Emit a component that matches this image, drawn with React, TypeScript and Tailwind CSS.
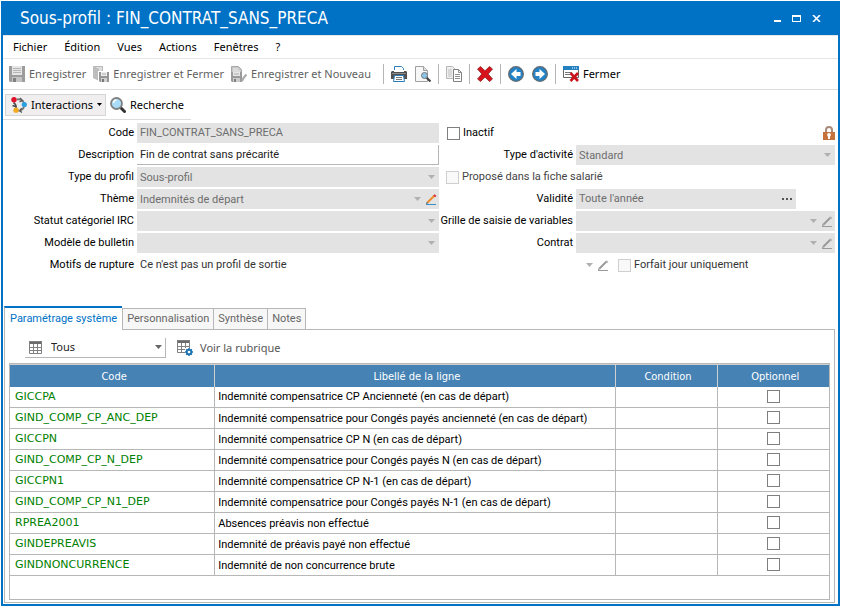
import { useState, type ReactNode } from 'react'

const body = "font-['Roboto',sans-serif]"
const wide = "font-['DejaVu_Sans',sans-serif]"

const lines = [
  { code: 'GICCPA', label: 'Indemnité compensatrice CP Ancienneté (en cas de départ)' },
  { code: 'GIND_COMP_CP_ANC_DEP', label: 'Indemnité compensatrice pour Congés payés ancienneté (en cas de départ)' },
  { code: 'GICCPN', label: 'Indemnité compensatrice CP N (en cas de départ)' },
  { code: 'GIND_COMP_CP_N_DEP', label: 'Indemnité compensatrice pour Congés payés N (en cas de départ)' },
  { code: 'GICCPN1', label: 'Indemnité compensatrice CP N-1 (en cas de départ)' },
  { code: 'GIND_COMP_CP_N1_DEP', label: 'Indemnité compensatrice pour Congés payés N-1 (en cas de départ)' },
  { code: 'RPREA2001', label: 'Absences préavis non effectué' },
  { code: 'GINDEPREAVIS', label: 'Indemnité de préavis payé non effectué' },
  { code: 'GINDNONCURRENCE', label: 'Indemnité de non concurrence brute' },
]

/* ---------- icons ---------- */

function Svg({ children, className = 'h-4 w-4' }: { children: ReactNode; className?: string }) {
  return (
    <svg viewBox="0 0 16 16" className={`shrink-0 ${className}`} fill="none" aria-hidden="true">
      {children}
    </svg>
  )
}

function SaveIcon() {
  return (
    <Svg>
      <path d="M0 0h16v16H1l-1-1z" fill="#9c9c9c" />
      <path d="M3 0h10v9H3z" fill="#e6e6e6" />
      <path d="M4 2.500h8M4 4.500h8M4 6.500h8" stroke="#b5b5b5" />
      <path d="M3 11h10v5H3z" fill="#c4c4c4" />
      <path d="M4 12h3v4H4z" fill="#808080" />
    </Svg>
  )
}

function SaveCloseIcon() {
  return (
    <Svg>
      <path d="M.5.5h9v11h-9z" fill="#dedede" stroke="#b8b8b8" />
      <path d="M0 0l6 3v12l-6-3z" fill="#bdbdbd" />
      <path d="M5 5h11v11H5z" fill="#fff" />
      <path d="M6 6h10v10H7l-1-1z" fill="#969696" />
      <path d="M8 6h6v4H8z" fill="#efefef" />
      <path d="M9 8h4" stroke="#aaa" />
      <path d="M8 12h6v4H8z" fill="#d0d0d0" />
      <path d="M9 13h2v3H9z" fill="#777" />
    </Svg>
  )
}

function SaveNewIcon() {
  return (
    <Svg>
      <path d="M.5.5h7l3 3V8H.5z" fill="#c6c6c6" stroke="#a8a8a8" />
      <path d="M2 3h5M2 5h7" stroke="#eee" />
      <path d="M0 6h11v10H1l-1-1z" fill="#9a9a9a" />
      <path d="M2 6h7v4H2z" fill="#e8e8e8" />
      <path d="M3 8h5" stroke="#aaa" />
      <path d="M2 12h7v4H2z" fill="#ccc" />
      <path d="M3 13h2v3H3z" fill="#808080" />
      <path d="M11 15l1.500-3 3-3.500" stroke="#aaa" strokeWidth="2.200" />
    </Svg>
  )
}

function PrinterIcon() {
  return (
    <Svg>
      <path d="M3.500.5h7l2 2v4h-9z" fill="#fff" stroke="#2b7cb8" />
      <path d="M1 5h14l1 1v7H0V6z" fill="#505050" />
      <path d="M3 4h10v2H3z" fill="#fff" />
      <path d="M1 7.500h14" stroke="#8b8b8b" />
      <path d="M3.500 9.500h9l1 6h-11z" fill="#fff" stroke="#2b7cb8" />
      <path d="M5 11.500h6M5 13.500h6" stroke="#777" />
    </Svg>
  )
}

function PreviewIcon() {
  return (
    <Svg>
      <path d="M.5.5h8l4 4v11H.5z" fill="#f7f7f7" stroke="#a0a0a0" />
      <path d="M8.500.5v4h4" fill="#ddd" stroke="#a0a0a0" />
      <path d="M11.500 11.500l4 4" stroke="#444" strokeWidth="2.200" />
      <circle cx="9.500" cy="9.500" r="3" fill="#8cc4e8" stroke="#777" />
    </Svg>
  )
}

function CopyIcon() {
  return (
    <Svg>
      <path d="M.5.5h6l2 2v10h-8z" fill="#efefef" stroke="#b8b8b8" />
      <path d="M2 4h4M2 6h4M2 8h4M2 10h4" stroke="#c0c0c0" />
      <path d="M7.500 3.500h5l3 3v9h-8z" fill="#fff" stroke="#808080" />
      <path d="M12.500 3.500v3h3M9 8.500h5M9 10.500h5M9 12.500h5" stroke="#909090" />
    </Svg>
  )
}

function DeleteIcon() {
  return (
    <Svg>
      <path
        d="M.5 3L3.500.5 8 4.800 12.500.5l3 2.500-4.300 5 4.300 5-3 2.500L8 11.200l-4.500 4.300-3-2.500L4.800 8z"
        fill="#d8121b"
        stroke="#8a2a2c"
        strokeWidth=".8"
      />
    </Svg>
  )
}

function ArrowIcon({ flip = false }: { flip?: boolean }) {
  return (
    <Svg className={flip ? 'h-4 w-4 -scale-x-100' : 'h-4 w-4'}>
      <circle cx="8" cy="8" r="7.300" fill="#2482c4" stroke="#5f6a72" strokeWidth="1.300" />
      <path d="M8.500 3L3 8l5.500 5v-3h4V6h-4z" fill="#fff" />
    </Svg>
  )
}

function CloseWindowIcon() {
  return (
    <Svg>
      <path d="M.5.5h15v11H.5z" fill="#fff" stroke="#666" />
      <path d="M0 0h16v4H0z" fill="#2480be" />
      <path d="M9 2h1M11 2h1M13 2h1" stroke="#fff" />
      <path d="M2 6.500h7M2 8.500h5" stroke="#777" />
      <path d="M7.500 7l7.500 8M15 7l-7.500 8" stroke="#c9141d" strokeWidth="2.600" />
    </Svg>
  )
}

function InteractionsIcon() {
  return (
    <Svg>
      <path d="M5.500 2.500c4-1 7 1 7.500 4M13 9.500c-.5 3-3.500 4.500-6.500 4" stroke="#777" strokeWidth="1.800" />
      <path d="M2.500 5.500c2 1.500 3 3.500 2.500 6M1.500 8.500l3 1" stroke="#4a4a4a" strokeWidth="1.600" />
      <path d="M9 .8l2.500 2.700-3 1.500M10.500 11l-1.500 3 2 1.500" stroke="#555" strokeWidth="1.200" />
      <circle cx="3" cy="2.800" r="2.700" fill="#e3122b" />
      <circle cx="13.300" cy="7.500" r="2.600" fill="#2ba0df" />
      <circle cx="5" cy="13.200" r="2.600" fill="#f2ab1b" />
    </Svg>
  )
}

function SearchIcon() {
  return (
    <Svg>
      <path d="M10.500 10.500l4 4" stroke="#333" strokeWidth="3" strokeLinecap="round" />
      <circle cx="6.500" cy="6.500" r="5.500" fill="#a9dcf6" stroke="#808080" strokeWidth="1.800" />
      <path d="M3.500 6a3 3 0 0 1 3-3" stroke="#fff" strokeWidth="1.500" />
    </Svg>
  )
}

function Caret({ className = 'text-[#b0b0b0]' }: { className?: string }) {
  return (
    <svg viewBox="0 0 7 4" className={`h-1 w-[7px] shrink-0 ${className}`} aria-hidden="true">
      <path d="M0 0h7L3.500 4z" fill="currentColor" />
    </svg>
  )
}

function Pencil({ color = false }: { color?: boolean }) {
  return (
    <svg viewBox="0 0 11 11" className="block h-[11px] w-[11px] shrink-0" fill="none" aria-hidden="true">
      <path d="M0 10.500h10" stroke={color ? '#3b8fc4' : '#9b9b9b'} />
      <path d="M1.500 8.500L8.500 1.500" stroke={color ? '#ee8b2a' : '#9a9a9a'} strokeWidth="2" />
      <path d="M8 .8l1.800 1.800" stroke={color ? '#d8283c' : '#b5b5b5'} strokeWidth="1.800" />
      <path d="M0 10l.8-2.300 1.500 1.500z" fill={color ? '#555' : '#8f8f8f'} />
    </svg>
  )
}

function LockIcon() {
  return (
    <svg viewBox="0 0 12 14" className="h-3.5 w-3 shrink-0" fill="none" role="img" aria-label="Verrouillé">
      <path d="M3 7V4a3 3 0 0 1 6 0v3" stroke="#a98a78" strokeWidth="2" />
      <path d="M0 6h12v8H0z" fill="#c5733b" />
      <circle cx="6" cy="8.800" r="1.900" fill="#fff" />
      <path d="M5 9h2v4H5z" fill="#fff" />
    </svg>
  )
}

function GridIcon() {
  return (
    <svg viewBox="0 0 13 13" className="h-[13px] w-[13px] shrink-0" fill="none" aria-hidden="true">
      <path d="M0 0h13v3H0z" fill="#6a6a6a" />
      <path d="M.5.5h12v12H.5zM0 6.500h13M0 9.500h13M4.500 3v10M8.500 3v10" stroke="#808080" />
    </svg>
  )
}

function GridGearIcon() {
  return (
    <Svg>
      <path d="M0 0h13v3H0z" fill="#6a6a6a" />
      <path d="M.5.5h12v12H.5zM0 6.500h13M0 9.500h13M4.500 3v10M8.500 3v10" stroke="#808080" />
      <path d="M8 8h8v8H8z" fill="#fff" />
      <circle cx="12" cy="12" r="2.300" stroke="#2277b5" strokeWidth="2" />
      <path
        d="M12 8v1.500M12 14.500V16M8 12h1.500M14.500 12H16M9.200 9.200l1 1M13.800 13.800l1 1M14.800 9.200l-1 1M9.200 14.800l1-1"
        stroke="#2277b5"
        strokeWidth="1.600"
      />
    </Svg>
  )
}

/* ---------- controls ---------- */

function ToolButton({ icon, children, muted = false }: { icon: ReactNode; children: string; muted?: boolean }) {
  return (
    <button type="button" className={`flex items-center gap-1 whitespace-nowrap ${muted ? 'text-[#5f5f5f]' : 'text-black'}`}>
      {icon}
      {children}
    </button>
  )
}

function IconButton({ label, children }: { label: string; children: ReactNode }) {
  return (
    <button type="button" aria-label={label}>
      {children}
    </button>
  )
}

function Separator() {
  return <span className="h-5 w-px bg-[#b5b5b5]" />
}

function Label({ id, children }: { id: string; children: string }) {
  return (
    <label htmlFor={id} className="pr-[3px] text-right whitespace-nowrap text-black">
      {children}
    </label>
  )
}

function SelectField({ id, value = '', edit, color }: { id: string; value?: string; edit?: string; color?: boolean }) {
  return (
    <div className={`flex h-5 items-center gap-[5px] bg-[#e3e3e3] ${edit ? 'pr-0.5' : 'pr-1'}`}>
      <select id={id} disabled className="h-5 min-w-0 flex-1 appearance-none pt-px pl-[3px] text-[#6d6d6d] opacity-100">
        <option>{value}</option>
      </select>
      <Caret />
      {edit && (
        <IconButton label={edit}>
          <Pencil color={color} />
        </IconButton>
      )}
    </div>
  )
}

function CheckBox({ disabled = false, label }: { disabled?: boolean; label?: string }) {
  return (
    <input
      type="checkbox"
      aria-label={label}
      disabled={disabled}
      className="block h-[13px] w-[13px] shrink-0 appearance-none border border-[#7f7f7f] bg-white checked:bg-[#0072c6] disabled:border-[#cfcfcf] disabled:bg-[#f9f9f9]"
    />
  )
}

/* ---------- sections ---------- */

function TitleBar() {
  return (
    <header className="flex h-8 items-center justify-between bg-[#0072c6] pr-[17px] pb-0.5 pl-[17px] text-white">
      <h1 className="font-['DejaVu_Sans_Condensed','DejaVu_Sans',sans-serif] text-[17px] font-stretch-condensed whitespace-nowrap">
        Sous-profil : FIN_CONTRAT_SANS_PRECA
      </h1>
      <div className="flex items-center gap-[11px]">
        <button type="button" aria-label="Réduire" className="flex h-[7px] w-[7px] items-end">
          <span className="h-0.5 w-full bg-white" />
        </button>
        <button type="button" aria-label="Agrandir" className="h-[7px] w-[9px] border border-t-2 border-white" />
        <button type="button" aria-label="Fermer la fenêtre">
          <svg viewBox="0 0 9 7" className="block h-[7px] w-[9px]" aria-hidden="true">
            <path d="M1 0l7 7M8 0L1 7" stroke="#fff" strokeWidth="1.600" />
          </svg>
        </button>
      </div>
    </header>
  )
}

function MenuBar() {
  return (
    <nav className="flex h-6 items-center gap-[17px] border-t border-b border-[#e6e6e6] px-2.5 text-black">
      {['Fichier', 'Édition', 'Vues', 'Actions', 'Fenêtres', '?'].map((item) => (
        <button key={item} type="button">
          {item}
        </button>
      ))}
    </nav>
  )
}

function Toolbar() {
  return (
    <div className="flex h-[31px] items-center border-b border-[#dcdcdc] pl-1.5">
      <div className="flex items-center gap-[7px]">
        <ToolButton muted icon={<SaveIcon />}>Enregistrer</ToolButton>
        <ToolButton muted icon={<SaveCloseIcon />}>Enregistrer et Fermer</ToolButton>
        <ToolButton muted icon={<SaveNewIcon />}>Enregistrer et Nouveau</ToolButton>
      </div>
      <div className="flex items-center gap-[7px] pl-3">
        <Separator />
        <div className="flex gap-2">
          <IconButton label="Imprimer"><PrinterIcon /></IconButton>
          <IconButton label="Aperçu"><PreviewIcon /></IconButton>
        </div>
        <Separator />
        <IconButton label="Copier"><CopyIcon /></IconButton>
        <Separator />
        <IconButton label="Supprimer"><DeleteIcon /></IconButton>
        <Separator />
        <div className="flex gap-2">
          <IconButton label="Précédent"><ArrowIcon /></IconButton>
          <IconButton label="Suivant"><ArrowIcon flip /></IconButton>
        </div>
        <Separator />
        <ToolButton icon={<CloseWindowIcon />}>Fermer</ToolButton>
      </div>
    </div>
  )
}

function SubToolbar() {
  return (
    <div className="flex h-[30px] w-[188px] items-center gap-1 border-b border-[#dcdcdc] pl-0.5 text-black">
      <button
        type="button"
        className="flex h-[22px] items-center gap-1 border border-[#d5d5d5] bg-[#f0eeee] pr-[3px] pl-[5px] whitespace-nowrap"
      >
        <InteractionsIcon />
        Interactions
        <svg viewBox="0 0 5 3" className="h-[3px] w-[5px]" aria-hidden="true">
          <path d="M0 0h5L2.500 3z" fill="#000" />
        </svg>
      </button>
      <ToolButton icon={<SearchIcon />}>Recherche</ToolButton>
    </div>
  )
}

function ProfileForm() {
  return (
    <form className={`${body} grid grid-cols-[134px_302fr_137px_259fr] items-center gap-y-0.5 pt-[3px] pr-[3px] leading-5`}>
      <Label id="code">Code</Label>
      <input id="code" disabled defaultValue="FIN_CONTRAT_SANS_PRECA" className="h-5 min-w-0 bg-[#e3e3e3] pl-[3px] text-[#6d6d6d]" />
      <label className="flex items-center gap-[3px] pl-2 text-black">
        <CheckBox />
        Inactif
      </label>
      <div className="flex justify-end">
        <LockIcon />
      </div>

      <Label id="description">Description</Label>
      <input
        id="description"
        defaultValue="Fin de contrat sans précarité"
        className="h-5 min-w-0 border-r border-b border-[#b7b7b7] bg-white pt-px pl-[3px] text-[#222]"
      />
      <Label id="activite">Type d'activité</Label>
      <SelectField id="activite" value="Standard" />

      <Label id="type">Type du profil</Label>
      <SelectField id="type" value="Sous-profil" />
      <label className="col-span-2 flex items-center gap-[3px] pl-[7px] text-[#444]">
        <CheckBox disabled />
        Proposé dans la fiche salarié
      </label>

      <Label id="theme">Thème</Label>
      <SelectField id="theme" value="Indemnités de départ" edit="Modifier le thème" color />
      <Label id="validite">Validité</Label>
      <div className="mr-[15%] flex h-5 items-center bg-[#e3e3e3] pr-1">
        <input id="validite" disabled defaultValue="Toute l'année" className="h-5 min-w-0 flex-1 pl-[3px] text-[#6d6d6d]" />
        <button type="button" aria-label="Choisir la validité" className="flex gap-0.5">
          <span className="h-0.5 w-0.5 bg-[#555]" />
          <span className="h-0.5 w-0.5 bg-[#555]" />
          <span className="h-0.5 w-0.5 bg-[#555]" />
        </button>
      </div>

      <Label id="statut">Statut catégoriel IRC</Label>
      <SelectField id="statut" />
      <Label id="grille">Grille de saisie de variables</Label>
      <SelectField id="grille" edit="Modifier la grille" />

      <Label id="modele">Modèle de bulletin</Label>
      <SelectField id="modele" />
      <Label id="contrat">Contrat</Label>
      <SelectField id="contrat" edit="Modifier le contrat" />

      <Label id="motifs">Motifs de rupture</Label>
      <input
        id="motifs"
        readOnly
        defaultValue="Ce n'est pas un profil de sortie"
        className="col-span-2 h-5 min-w-0 bg-white pl-[3px] text-[#333]"
      />
      <div className="flex items-center gap-[9px] pl-2.5">
        <span className="flex items-center gap-[5px]">
          <Caret />
          <IconButton label="Modifier les motifs">
            <Pencil />
          </IconButton>
        </span>
        <label className="flex items-center gap-[3px] whitespace-nowrap text-[#333]">
          <CheckBox disabled />
          Forfait jour uniquement
        </label>
      </div>
    </form>
  )
}

function Tabs({ active, onSelect }: { active: string; onSelect: (tab: string) => void }) {
  return (
    <div role="tablist" className={`${body} flex items-end pl-px`}>
      {['Paramétrage système', 'Personnalisation', 'Synthèse', 'Notes'].map((tab) =>
        tab === active ? (
          <button
            key={tab}
            type="button"
            role="tab"
            aria-selected
            className="relative -mb-px h-6 border-t-2 border-l border-t-[#0072c6] border-l-[#b7b7b7] bg-white px-[5px] whitespace-nowrap text-[#0072c6]"
          >
            {tab}
          </button>
        ) : (
          <button
            key={tab}
            type="button"
            role="tab"
            aria-selected={false}
            onClick={() => onSelect(tab)}
            className="h-[21px] border-t border-r border-[#b7b7b7] bg-[#f7f7f7] px-1 whitespace-nowrap text-[#666] nth-2:border-l"
          >
            {tab}
          </button>
        ),
      )}
    </div>
  )
}

function LinesTable() {
  return (
    <div className={`${body} flex-1 border border-[#b7b7b7]`}>
      <table className="w-full table-fixed border-collapse">
        <colgroup>
          <col className="w-[25%]" />
          <col />
          <col className="w-[102px]" />
          <col className="w-[112px]" />
        </colgroup>
        <thead>
          <tr className="h-[22px] border-t border-[#cfcfcf] bg-[#4682b4] text-white">
            {['Code', 'Libellé de la ligne', 'Condition', 'Optionnel'].map((h) => (
              <th
                key={h}
                className="border-l border-[#cfcfcf] p-0 pt-0.5 pl-1 font-['DejaVu_Sans_Condensed','DejaVu_Sans',sans-serif] font-normal font-stretch-condensed first:border-l-0"
              >
                {h}
              </th>
            ))}
          </tr>
        </thead>
        <tbody>
          {lines.map((line) => (
            <tr key={line.code} className="h-[21px] border-b border-[#b7b7b7]">
              <td className={`${wide} p-0 pl-[5px] text-[#008000]`}>{line.code}</td>
              <td className="border-l border-[#b7b7b7] p-0 pt-px pl-[3px] whitespace-nowrap text-black">{line.label}</td>
              <td className="border-l border-[#b7b7b7] p-0" />
              <td className="border-l border-[#b7b7b7] p-0">
                <div className="flex justify-center pb-px">
                  <CheckBox label={`Optionnel ${line.code}`} />
                </div>
              </td>
            </tr>
          ))}
        </tbody>
      </table>
    </div>
  )
}

export default function App() {
  const [tab, setTab] = useState('Paramétrage système')

  return (
    <div className="flex min-h-screen flex-col bg-white p-px">
      <div className="flex flex-1 flex-col border-2 border-[#0072c6] font-['Noto_Sans',sans-serif] text-[11px] leading-4">
        <TitleBar />
        <MenuBar />
        <Toolbar />
        <SubToolbar />
        <ProfileForm />

        <section className="mt-[31px] mr-[3px] mb-px flex flex-1 flex-col">
          <Tabs active={tab} onSelect={setTab} />
          <div className="ml-px flex flex-1 flex-col border border-[#b7b7b7] px-1 pb-0.5">
            <div className="flex h-[33px] items-center gap-[11px] pt-0.5 pl-4">
              <div className="flex h-5 w-[141px] items-center border-r border-b border-[#b7b7b7] pr-[3px] pl-1">
                <GridIcon />
                <select aria-label="Filtre" defaultValue="Tous" className="h-5 flex-1 appearance-none pl-[9px] text-[#222]">
                  <option>Tous</option>
                </select>
                <Caret className="text-[#666]" />
              </div>
              <button type="button" className="flex items-center gap-[7px] whitespace-nowrap text-[#555]">
                <GridGearIcon />
                Voir la rubrique
              </button>
            </div>
            <LinesTable />
          </div>
        </section>
      </div>
    </div>
  )
}
